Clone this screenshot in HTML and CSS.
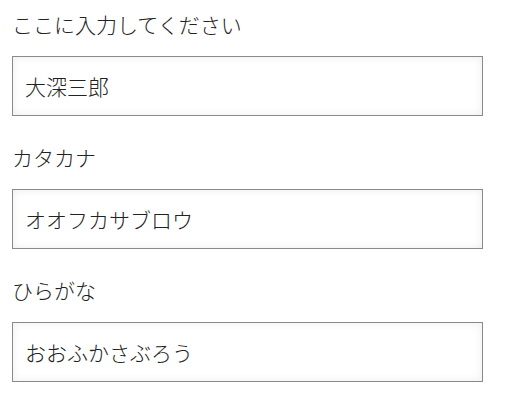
FILE: index.html
```html
<!DOCTYPE html>
<html lang="ja">
<head>
<meta charset="utf-8">
<link rel="stylesheet" href="styles.css">
</head>
<body>
<form class="form">
  <div class="field">
    <label class="label" for="name">ここに入力してください</label>
    <input class="input" id="name" type="text" value="大深三郎">
  </div>
  <div class="field">
    <label class="label" for="kata">カタカナ</label>
    <input class="input" id="kata" type="text" value="オオフカサブロウ">
  </div>
  <div class="field">
    <label class="label" for="hira">ひらがな</label>
    <input class="input" id="hira" type="text" value="おおふかさぶろう">
  </div>
</form>
</body>
</html>
```
FILE: styles.css
```css
html, body {
  margin: 0;
  padding: 0;
  background: #ffffff;
}
body {
  font-family: "Noto Sans CJK JP", "Noto Sans", sans-serif;
  color: #222222;
}
.form {
  display: flex;
  flex-direction: column;
  gap: 26px;
  padding: 9px 28px 0 12px;
  width: 471px;
}
.field {
  display: flex;
  flex-direction: column;
}
.label {
  font-size: 21px;
  font-weight: 300;
  line-height: 30px;
  margin-bottom: 17px;
  color: #222222;
}
.input {
  box-sizing: border-box;
  width: 471px;
  height: 60px;
  margin: 0;
  padding: 0 12px;
  border: 1px solid #8a8a8a;
  border-radius: 0;
  background: #ffffff;
  box-shadow: inset 0 0 8px rgba(0, 0, 0, 0.08);
  font-family: "Noto Sans CJK JP", "Noto Sans", sans-serif;
  font-size: 21px;
  font-weight: 300;
  color: #222222;
  outline: none;
}
```
